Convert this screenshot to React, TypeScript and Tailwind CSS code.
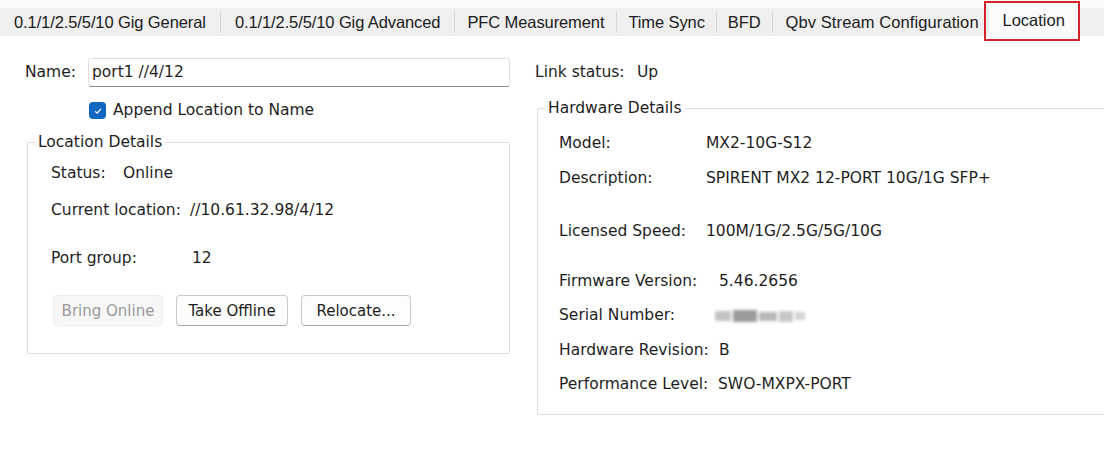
import React from 'react';

const tabs = [
  { label: '0.1/1/2.5/5/10 Gig General', pad: 'px-[14px] tracking-[-0.1px]' },
  { label: '0.1/1/2.5/5/10 Gig Advanced', pad: 'px-[14px] tracking-[-0.1px]' },
  { label: 'PFC Measurement', pad: 'px-[12px] tracking-[-0.1px]' },
  { label: 'Time Sync', pad: 'px-[11px] tracking-[-0.1px]' },
  { label: 'BFD', pad: 'px-[11px] tracking-[-0.1px]' },
  { label: 'Qbv Stream Configuration', pad: 'pl-[13px] pr-[10px] tracking-[0.1px]' },
];

const body = { fontFamily: '"DejaVu Sans", "Liberation Sans", sans-serif' };

const TabBar: React.FC = () => (
  <div
    className="relative h-[36px] bg-[#f9f9f9] flex items-end"
    style={{ fontFamily: '"Liberation Sans", Arial, sans-serif' }}
  >
    <div className="h-[28px] bg-[#efefef] flex items-center">
      {tabs.map((t, i) => (
        <React.Fragment key={t.label}>
          <div className={`${t.pad} text-[16.5px] text-[#1c1c1c] whitespace-nowrap`}>{t.label}</div>
          {i < tabs.length - 1 && <div className="w-px h-[22px] bg-[#d8d8d8]" />}
        </React.Fragment>
      ))}
    </div>
    <div className="h-[32px] w-[90px] bg-[#fbfbfb] flex items-center justify-center text-[16.5px] text-[#1c1c1c]">
      Location
    </div>
    <div className="flex-1 h-[28px] bg-[#efefef]" />
    {/* highlight annotation around the active tab */}
    <div className="absolute left-[984px] top-[1px] w-[96px] h-[40px] border-2 border-[#d4202c]" />
  </div>
);

const Row: React.FC<{ label: string; value?: React.ReactNode; w: string; h: string }> = ({ label, value, w, h }) => (
  <div className={`flex items-center ${h}`}>
    <span className={`${w} whitespace-nowrap`}>{label}</span>
    <span className="whitespace-nowrap">{value}</span>
  </div>
);

const App: React.FC = () => {
  return (
    <div className="w-[1104px] h-[449px] bg-white overflow-hidden text-[#1e1e1e]">
      <TabBar />
      <div className="flex pt-[22px]" style={body}>
        {/* left column */}
        <div className="w-[510px] shrink-0 pl-[25px] text-[15.5px]">
          <div className="flex items-center h-[29px]">
            <span className="w-[63px]">Name:</span>
            <div className="flex-1 h-[29px] border border-[#e1e1e1] border-b-[#8a8a8a] rounded-[3px] flex items-center px-[3px]">
              port1 //4/12
            </div>
          </div>
          <div className="flex items-center mt-[12px] ml-[64px] gap-[7px]">
            <span className="w-[17px] h-[17px] rounded-[4px] bg-[#0f67c2] flex items-center justify-center">
              <svg viewBox="0 0 12 12" className="w-[10px] h-[10px]" fill="none" stroke="white" strokeWidth="1.4">
                <path d="M2.5 6.3 L5 8.6 L9.6 3.4" />
              </svg>
            </span>
            <span>Append Location to Name</span>
          </div>
          <fieldset className="mt-[10px] ml-[2px] border border-[#dcdcdc] rounded-[2px] h-[222px] pl-[23px] pt-[10px]">
            <legend className="-ml-[16px] px-[3px] leading-[20px]">Location Details</legend>
            <Row label="Status:" value="Online" w="w-[72px]" h="h-[22px]" />
            <Row label="Current location:" value="//10.61.32.98/4/12" w="w-[139px]" h="h-[22px] mt-[15px]" />
            <Row label="Port group:" value="12" w="w-[141px]" h="h-[22px] mt-[26px]" />
            <div className="flex gap-[13px] mt-[26px] ml-[2px] text-[15px]">
              <button className="h-[31px] w-[110px] rounded-[4px] border border-[#ededed] bg-[#f7f7f7] text-[#9a9a9a]">Bring Online</button>
              <button className="h-[31px] w-[112px] rounded-[4px] border border-[#c9c9c9] border-b-[#a8a8a8] bg-[#fdfdfd]">Take Offline</button>
              <button className="h-[31px] w-[110px] rounded-[4px] border border-[#c9c9c9] border-b-[#a8a8a8] bg-[#fdfdfd]">Relocate...</button>
            </div>
          </fieldset>
        </div>
        {/* right column */}
        <div className="flex-1 pl-[25px] text-[15.5px]">
          <div className="flex items-center h-[29px]">
            <span className="w-[102px]">Link status:</span>
            <span>Up</span>
          </div>
          <fieldset className="mt-[11px] ml-[2px] -mr-[10px] border border-[#dcdcdc] rounded-[2px] h-[317px] pl-[21px] pt-[15px]">
            <legend className="-ml-[14px] px-[3px] leading-[20px]">Hardware Details</legend>
            <Row label="Model:" value="MX2-10G-S12" w="w-[147px]" h="h-[22px]" />
            <Row label="Description:" value="SPIRENT MX2 12-PORT 10G/1G SFP+" w="w-[147px]" h="h-[22px] mt-[13px]" />
            <Row label="Licensed Speed:" value="100M/1G/2.5G/5G/10G" w="w-[147px]" h="h-[22px] mt-[31px]" />
            <Row label="Firmware Version:" value="5.46.2656" w="w-[160px]" h="h-[22px] mt-[28px]" />
            <Row
              label="Serial Number:"
              w="w-[156px]"
              h="h-[22px] mt-[12px]"
              value={
                <span className="flex items-center gap-[2px] blur-[1.5px]">
                  <span className="w-[16px] h-[10px] bg-[#c4c4c4]" />
                  <span className="w-[24px] h-[12px] bg-[#9c9c9c]" />
                  <span className="w-[18px] h-[9px] bg-[#b8b8b8]" />
                  <span className="w-[14px] h-[11px] bg-[#c8c8c8]" />
                  <span className="w-[10px] h-[8px] bg-[#d4d4d4]" />
                </span>
              }
            />
            <Row label="Hardware Revision:" value="B" w="w-[160px]" h="h-[22px] mt-[13px]" />
            <Row label="Performance Level:" value="SWO-MXPX-PORT" w="w-[159px]" h="h-[22px] mt-[12px]" />
          </fieldset>
        </div>
      </div>
    </div>
  );
};

export default App;
